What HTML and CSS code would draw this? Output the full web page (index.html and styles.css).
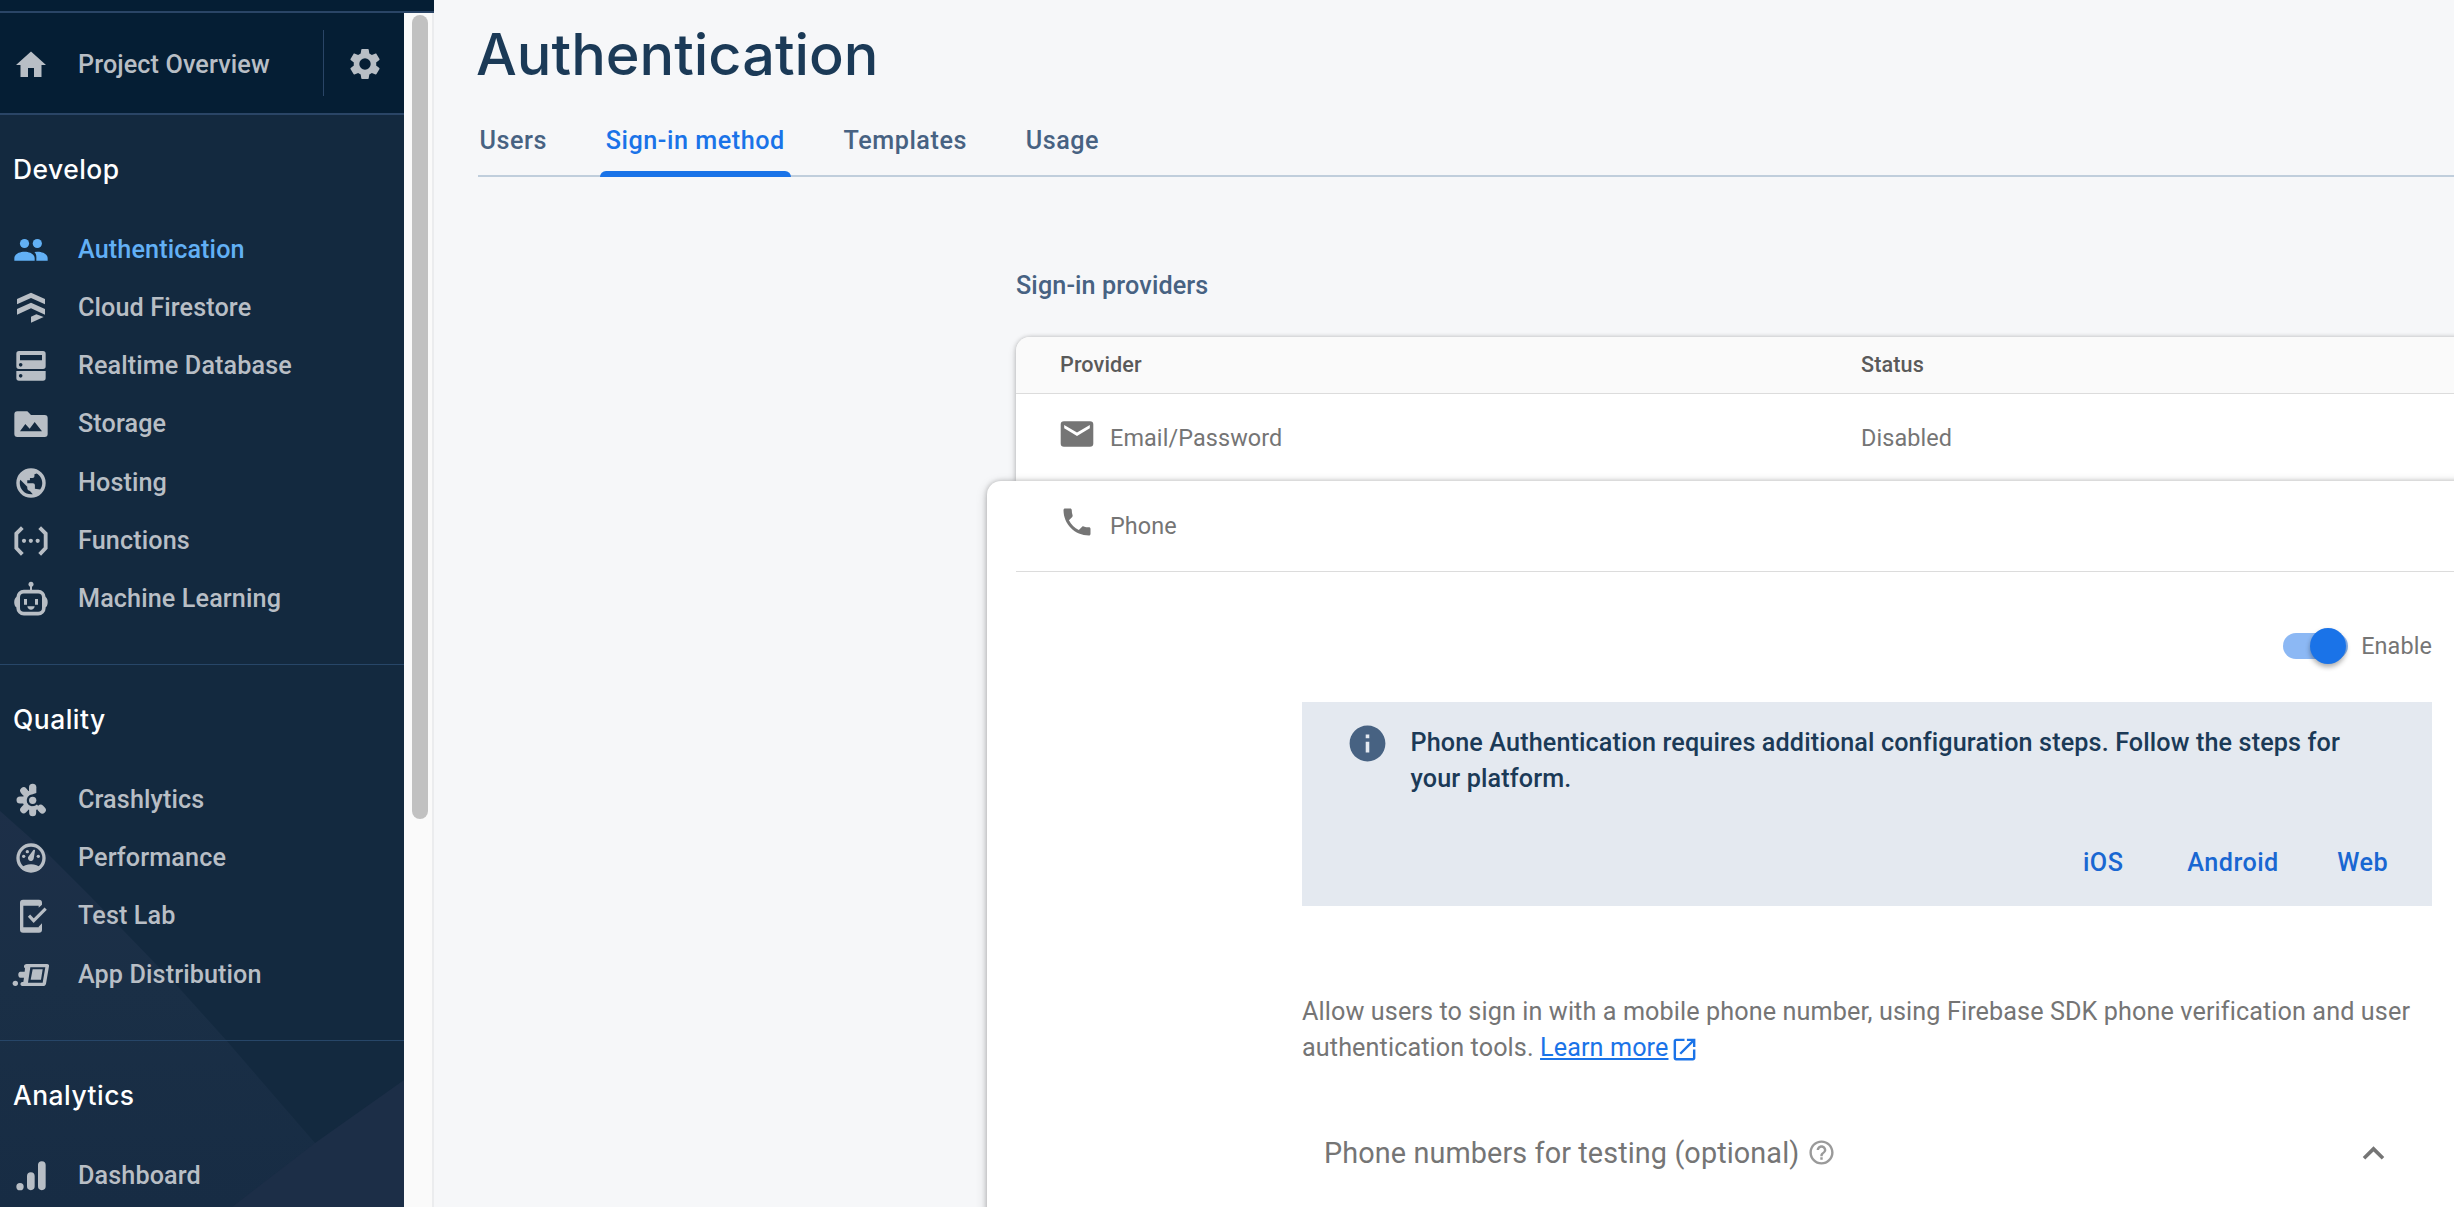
FILE: index.html
```html
<!DOCTYPE html>
<html lang="en">
<head>
<meta charset="utf-8">
<title>Authentication</title>
<link rel="stylesheet" href="styles.css">
</head>
<body>
<div class="app">
  <aside class="side">
    <div class="topbar"></div>
    <div class="side-body">
      <nav class="nav">
        <svg class="facets" viewBox="0 0 404 1194" aria-hidden="true">
          <defs>
            <linearGradient id="fade" x1="0" y1="790" x2="0" y2="1194" gradientUnits="userSpaceOnUse">
              <stop offset="0" stop-color="#1d2f48"/>
              <stop offset=".45" stop-color="#1a2f46"/>
              <stop offset="1" stop-color="#172c44"/>
            </linearGradient>
          </defs>
          <path d="M0 798L45 838 90 883 180 976 226 1027 315 1130 370 1194H0z" fill="url(#fade)"/>
          <path d="M404 1067L315 1130 232 1194H404z" fill="#1c2e47"/>
        </svg>
        <div class="overview">
          <svg class="icon" viewBox="0 0 24 24"><path d="M10 20v-6h4v6h5v-8h3L12 3 2 12h3v8z"/></svg>
          <span class="label">Project Overview</span>
          <span class="split"></span>
          <svg class="icon gear" viewBox="0 0 24 24"><path fill-rule="evenodd" d="M19.43 12.98c.04-.32.07-.64.07-.98s-.03-.66-.07-.98l2.11-1.65c.19-.15.24-.42.12-.64l-2-3.46c-.12-.22-.39-.3-.61-.22l-2.49 1c-.52-.4-1.08-.73-1.69-.98l-.38-2.65C14.46 2.18 14.25 2 14 2h-4c-.25 0-.46.18-.49.42l-.38 2.65c-.61.25-1.17.59-1.69.98l-2.49-1c-.23-.09-.49 0-.61.22l-2 3.46c-.13.22-.07.49.12.64l2.11 1.65c-.04.32-.07.65-.07.98s.03.66.07.98l-2.11 1.65c-.19.15-.24.42-.12.64l2 3.46c.12.22.39.3.61.22l2.49-1c.52.4 1.08.73 1.69.98l.38 2.65c.03.24.24.42.49.42h4c.25 0 .46-.18.49-.42l.38-2.65c.61-.25 1.17-.59 1.69-.98l2.49 1c.23.09.49 0 .61-.22l2-3.46c.12-.22.07-.49-.12-.64zM12 15.8a3.8 3.8 0 1 1 0-7.6 3.8 3.8 0 0 1 0 7.6z"/></svg>
        </div>

        <section class="group">
          <h2 class="group-title">Develop</h2>
          <a class="item active"><svg class="icon" viewBox="39 696 108 108"><circle cx="73.500" cy="730.500" r="13.800"/><circle cx="112" cy="730.500" r="13.800"/><path d="M43 782V775C43 762 58 755 73.500 755S104 762 104 775V782zM109 782H143V775C143 762 128 755 112.500 755L103 756C108 760 109.500 767 109 774z"/></svg><span class="label">Authentication</span></a>
          <a class="item"><svg class="icon" viewBox="39 871 108 108"><path d="M93 879L135 898V914L93 895 51 914V898zM93 909L135 928V945L93 926 51 945V928zM93 951L109 944 131 952 93 969z"/></svg><span class="label">Cloud Firestore</span></a>
          <a class="item"><svg class="icon" viewBox="39 57 108 108"><path fill-rule="evenodd" d="M57 66H129A8 8 0 0 1 137 74V112A8 8 0 0 1 129 120H57A8 8 0 0 1 49 112V74A8 8 0 0 1 57 66zM60 78V94H126V78zM62 102A5.500 5.500 0 1 0 62 113 5.500 5.500 0 1 0 62 102zM49 126H137V147A8 8 0 0 1 129 155H57A8 8 0 0 1 49 147zM62 135A5.500 5.500 0 1 0 62 146 5.500 5.500 0 1 0 62 135z"/></svg><span class="label">Realtime Database</span></a>
          <a class="item"><svg class="icon" viewBox="39 230 108 108"><path fill-rule="evenodd" d="M52 246H82L93 257H134A9 9 0 0 1 143 266V314A9 9 0 0 1 134 323H52A9 9 0 0 1 43 314V255A9 9 0 0 1 52 246zM60 306H126L104 278 89 298 76 284z"/></svg><span class="label">Storage</span></a>
          <a class="item"><svg class="icon" viewBox="0 0 24 24"><path fill-rule="evenodd" d="M12 2.200A9.800 9.800 0 1 0 12 21.800 9.800 9.800 0 1 0 12 2.200zM4.900 9.900L9.500 14.500V15.400C9.500 16.400 10.200 17.200 11.300 17.400L13.200 19.500C8.400 20.100 4.500 16.500 4.500 12 4.500 11.200 4.600 10.600 4.900 9.900zM15.800 5.700C18 7 19.500 9.300 19.500 12 19.500 13.700 19 15.100 18.100 16.300L14.600 15.800V13.500C14.600 12.700 14.100 12.200 13.300 12.200H9.500V10.200H11.300V8.600H13C13.900 8.600 14.300 8 14.300 7.100V6.200z"/></svg><span class="label">Hosting</span></a>
          <a class="item"><svg class="icon" viewBox="39 579 108 108"><path fill="none" stroke="currentColor" stroke-width="11.500" d="M67 593L49 611V654L67 673M119 593L137 611V654L119 673"/><circle cx="72" cy="632.500" r="6.300"/><circle cx="92.500" cy="632.500" r="6.300"/><circle cx="113" cy="632.500" r="6.300"/></svg><span class="label">Functions</span></a>
          <a class="item"><svg class="icon" viewBox="39 752 108 108"><rect x="54.500" y="784" width="77" height="66" rx="17" fill="none" stroke="currentColor" stroke-width="11"/><circle cx="93" cy="762" r="7.500"/><path d="M90 765H96V782H90zM51 799C40 801 40 830 51 831zM135 799C146 801 146 830 135 831zM72 806H81V823H72zM105 806H114V823H105zM82 828H104C103 842 83 842 82 828z"/></svg><span class="label">Machine Learning</span></a>
        </section>

        <section class="group">
          <h2 class="group-title">Quality</h2>
          <a class="item"><svg class="icon" viewBox="39 365 108 108"><path d="M87 396V381A11 11 0 0 1 109 381V398L98 402z"/><g fill="none" stroke="currentColor" stroke-width="21" stroke-linecap="round"><path d="M98 449V457M60 419H69M71 391L76 397M71 448L76 443M122 444L127 449"/></g><path fill="none" stroke="currentColor" stroke-width="12" d="M98 396A24 24 0 1 0 115 437"/><circle cx="98" cy="420" r="11"/></svg><span class="label">Crashlytics</span></a>
          <a class="item"><svg class="icon" viewBox="39 539 108 108"><circle cx="93" cy="593" r="39" fill="none" stroke="currentColor" stroke-width="10"/><circle cx="71" cy="588" r="5"/><circle cx="82" cy="574" r="5"/><circle cx="115" cy="588" r="5"/><path d="M105 571C106 568 102 567 100 569L84 591C82 604 98 606 101 595zM62 624C78 608 108 608 124 624C108 638 78 638 62 624z"/></svg><span class="label">Performance</span></a>
          <a class="item"><svg class="icon" viewBox="39 715 108 108"><path fill="none" stroke="currentColor" stroke-width="9.500" d="M87 768L101 783 137 747"/><path d="M69 720H117A9 9 0 0 1 126 729V735L116 744V738H70V803H116V801L126 791V810A9 9 0 0 1 117 819H69A9 9 0 0 1 60 810V729A9 9 0 0 1 69 720z"/></svg><span class="label">Test Lab</span></a>
          <a class="item"><svg class="icon wide" viewBox="36 890 114 108"><path fill-rule="evenodd" d="M80 911H141C146 911 148 914 147 918L138 970C137 975 134 977 129 977H67C60 977 59 966 67 965H70L72 952H61C53 951 53 934 61 934H74L75 924C69 920 72 911 80 911zM91 921L84 967H128L136 921zM98 927H128L123 958H92z"/><circle cx="46" cy="969" r="8"/></svg><span class="label">App Distribution</span></a>
        </section>

        <section class="group">
          <h2 class="group-title">Analytics</h2>
          <a class="item"><svg class="icon" viewBox="39 594 108 108"><circle cx="60" cy="680" r="11"/><path fill="none" stroke="currentColor" stroke-width="23" stroke-linecap="round" d="M92.500 648V679M125.500 615V679"/></svg><span class="label">Dashboard</span></a>
        </section>
      </nav>
      <div class="scroll"><div class="thumb"></div></div>
    </div>
  </aside>

  <main class="main">
    <h1 class="title">Authentication</h1>
    <div class="tabs">
      <a class="tab">Users</a>
      <a class="tab on">Sign-in method</a>
      <a class="tab">Templates</a>
      <a class="tab">Usage</a>
    </div>

    <div class="content">
      <h2 class="heading">Sign-in providers</h2>
      <div class="card">
        <div class="row head"><span class="provider">Provider</span><span>Status</span></div>
        <div class="row">
          <div class="provider"><svg class="picon" viewBox="0 0 36 36"><path fill-rule="evenodd" d="M5 5.300H31A3.300 3.300 0 0 1 34.300 8.600V27.400A3.300 3.300 0 0 1 31 30.700H5A3.300 3.300 0 0 1 1.700 27.400V8.600A3.300 3.300 0 0 1 5 5.300zM5.200 9V12.200L18 20 30.800 12.200V9L18 16.600z"/></svg><span>Email/Password</span></div>
          <span>Disabled</span>
        </div>
      </div>
      <div class="panel">
        <div class="row phone">
          <div class="provider"><svg class="picon" viewBox="0 0 24 24"><path d="M6.620 10.790c1.440 2.830 3.760 5.140 6.590 6.590l2.200-2.200c.27-.27.67-.36 1.020-.24 1.120.37 2.330.57 3.570.57.55 0 1 .45 1 1V20c0 .55-.45 1-1 1-9.390 0-17-7.610-17-17 0-.55.45-1 1-1h3.500c.55 0 1 .45 1 1 0 1.250.2 2.450.57 3.570.11.35.03.74-.25 1.020l-2.200 2.200z"/></svg><span>Phone</span></div>
        </div>
        <div class="enable">
          <span class="toggle"><span class="knob"></span></span>
          <span>Enable</span>
        </div>
        <div class="info">
          <div class="info-main">
            <svg class="info-icon" viewBox="0 0 24 24"><path d="M12 2C6.480 2 2 6.480 2 12s4.480 10 10 10 10-4.480 10-10S17.520 2 12 2zm1 15h-2v-6h2v6zm0-8h-2V7h2v2z"/></svg>
            <p class="info-text">Phone Authentication requires additional configuration steps. Follow the steps for<br>your platform.</p>
          </div>
          <div class="links"><a class="ios">iOS</a><a>Android</a><a>Web</a></div>
        </div>
        <p class="desc">Allow users to sign in with a mobile phone number, using Firebase SDK phone verification and user<br>authentication tools. <a class="learn">Learn more</a><svg class="ext" viewBox="0 0 24 24"><path d="M19 19H5V5h7V3H5c-1.110 0-2 .9-2 2v14c0 1.100.89 2 2 2h14c1.100 0 2-.9 2-2v-7h-2v7zM14 3v2h3.590l-9.830 9.830 1.410 1.410L19 6.410V10h2V3h-7z"/></svg></p>
        <div class="testing">
          <span class="testing-label">Phone numbers for testing (optional)</span>
          <svg class="help" viewBox="0 0 24 24"><path d="M11 18h2v-2h-2v2zm1-16C6.480 2 2 6.480 2 12s4.480 10 10 10 10-4.480 10-10S17.520 2 12 2zm0 18c-4.410 0-8-3.590-8-8s3.590-8 8-8 8 3.590 8 8-3.590 8-8 8zm0-14c-2.210 0-4 1.790-4 4h2c0-1.100.9-2 2-2s2 .9 2 2c0 2-3 1.750-3 5h2c0-2.250 3-2.500 3-5 0-2.210-1.790-4-4-4z"/></svg>
          <svg class="chevron" viewBox="0 0 24 24"><path d="M12 8l-6 6 1.410 1.410L12 10.830l4.590 4.580L18 14z"/></svg>
        </div>
      </div>
    </div>
  </main>
</div>
</body>
</html>
```

FILE: styles.css
```css
* { box-sizing: border-box; }
body {
  margin: 0;
  height: 1207px;
  overflow: hidden;
  background: #f6f7f9;
  font: 400 25.2px/36px Roboto, sans-serif;
  letter-spacing: .11px;
  color: #757575;
}
h1, h2, p { margin: 0; }
svg { fill: currentColor; flex: none; display: block; }
.app { display: flex; height: 1207px; overflow: hidden; }

/* Sidebar */
.side { width: 434px; flex: none; display: flex; flex-direction: column; }
.topbar { height: 13px; flex: none; background: #051e34; border-bottom: 2px solid #2a4566; }
.side-body { display: flex; height: 1194px; }
.nav { position: relative; width: 404px; height: 1194px; overflow: hidden; background: #13293f; color: #b8bec5; }
.facets { position: absolute; left: 0; top: 0; width: 404px; height: 1194px; }
.overview {
  position: relative;
  display: flex;
  align-items: center;
  height: 102px;
  padding: 3px 0 0 13px;
  background: #051e34;
  border-bottom: 2px solid #2a4566;
}
.icon { width: 36px; height: 36px; margin-right: 29px; }
.icon.wide { width: 38px; margin: 0 28px 0 -1px; }
.label { font-weight: 500; white-space: nowrap; }
.overview .label { width: 245px; }
.split { width: 1px; height: 66px; margin-bottom: 3px; background: #2a4566; }
.gear { margin: 0 0 2px 22.500px; }
.group { position: relative; border-bottom: 1px solid #274668; padding-bottom: 36px; }
.group-title {
  height: 105.8px;
  padding: 36px 0 0 13px;
  font: 500 26.4px/36px Inter, sans-serif;
  letter-spacing: .5px;
  color: #fff;
}
.item { display: flex; align-items: center; height: 58.2px; padding-left: 13px; }
.item.active { color: #62b0f5; }
.scroll { width: 30px; height: 1194px; padding: 2px 0 0 8px; background: #fafafa; border-right: 2px solid #ebecee; }
.thumb { width: 16px; height: 804px; border-radius: 8px; background: #c1c1c1; }

/* Main column */
.main { flex: 1; min-width: 0; overflow: hidden; padding-left: 44px; }
.title { height: 108px; margin-left: -2px; font: 500 57.6px/108px Inter, sans-serif; letter-spacing: 0; color: #1b3a57; }
.tabs { display: flex; gap: 58.7px; height: 69px; padding-left: 1.5px; border-bottom: 2px solid #c0cedc; }
.tab { position: relative; line-height: 65px; font-weight: 500; color: #476282; letter-spacing: .54px; }
.tab.on { color: #1a73e8; }
.tab.on::after {
  content: "";
  position: absolute;
  left: -6px; right: -6px; bottom: -2px;
  height: 6px;
  border-radius: 6px 6px 0 0;
  background: #1a73e8;
}
.content { margin: 91px -30px 0 538px; }
.heading { font: 500 25.2px/36px Roboto, sans-serif; color: #476282; margin-bottom: 33px; }
.card {
  border-radius: 14px 14px 0 0;
  background: #fff;
  box-shadow: 0 0 4px rgba(0,0,0,.22), 0 3px 8px rgba(0,0,0,.14);
}
.row { display: flex; align-items: center; height: 87px; padding-left: 44px; font-size: 23.4px; }
.row.head {
  height: 57px;
  border-bottom: 1px solid #dcdcdc;
  border-radius: 14px 14px 0 0;
  background: #fafafa;
  font-size: 21.6px;
  font-weight: 500;
  color: #5a5a5a;
}
.provider { display: flex; align-items: center; width: 801px; }
.picon { width: 36px; height: 36px; margin: 0 15px 8px -1px; }
.panel {
  position: relative;
  margin-left: -29px;
  height: 740px;
  padding-left: 29px;
  border-radius: 14px 14px 0 0;
  background: #fff;
  box-shadow: 0 0 5px rgba(0,0,0,.24), 0 3px 12px rgba(0,0,0,.18);
}
.row.phone { height: 91px; border-bottom: 1px solid #dcdcdc; }
.enable {
  display: flex;
  align-items: center;
  justify-content: flex-end;
  gap: 13px;
  height: 36px;
  margin: 56px 52px 38px 0;
  font-size: 23.4px;
}
.toggle { position: relative; width: 65px; height: 26px; border-radius: 13px; background: #8cb8f4; }
.knob {
  position: absolute;
  right: 2px; top: -5px;
  width: 36px; height: 36px;
  border-radius: 50%;
  background: #1a73e8;
  box-shadow: 0 3px 5px rgba(0,0,0,.32);
}
.info { margin: 0 52px 0 286px; height: 204px; padding: 23px 44px 0 43.5px; background: #e4e9f0; }
.info-main { display: flex; gap: 22px; }
.info-icon { width: 43px; height: 43px; margin-top: -3px; color: #476282; }
.info-text { font-weight: 500; color: #1b3a57; white-space: nowrap; letter-spacing: .12px; }
.links { display: flex; justify-content: flex-end; gap: 58.5px; margin-top: 48px; font-weight: 500; color: #1967d2; letter-spacing: .45px; }
.ios { margin-right: 5.5px; }
.desc { margin: 88px 0 0 286px; white-space: nowrap; letter-spacing: .1px; }
.learn { color: #1a73e8; text-decoration: underline; }
.ext { display: inline-block; width: 29px; height: 29px; margin: -4px 0 -7px 2px; vertical-align: -1px; color: #1a73e8; }
.testing { display: flex; align-items: center; margin: 69px 58px 0 308px; height: 36px; font-size: 28.8px; }
.help { width: 29px; height: 29px; margin: 0 auto 1px 8px; color: #9a9a9a; }
.chevron { width: 43px; height: 43px; margin-right: 31px; }
```
